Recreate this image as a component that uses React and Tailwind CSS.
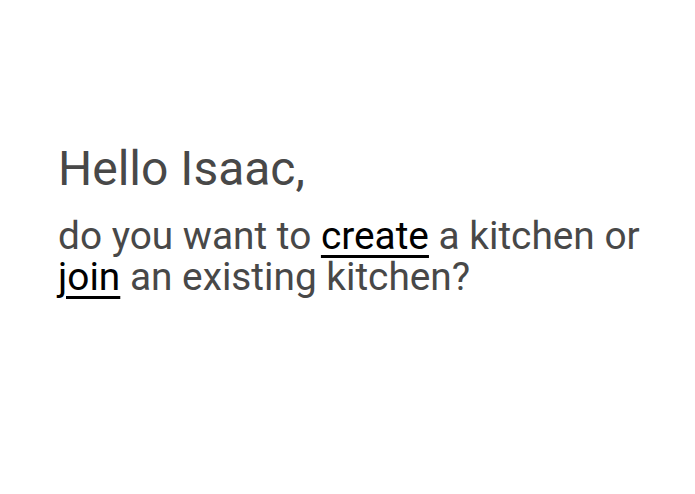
import React from "react";

const App = () => {
  return (
    <div className="w-[695px] h-[494px] bg-white font-['Roboto',sans-serif] text-[#484848]">
      <div className="pt-[141px] pl-[58px] pr-[30px]">
        <h1 className="text-[48px] leading-[56px] font-normal">Hello Isaac,</h1>
        <p className="mt-[18px] text-[38.8px] leading-[41px]">
          do you want to{" "}
          <a href="#" className="text-black underline decoration-[2.5px] underline-offset-[6px]">create</a>{" "}
          a kitchen or{" "}
          <a href="#" className="text-black underline decoration-[2.5px] underline-offset-[6px]">join</a>{" "}
          an existing kitchen?
        </p>
      </div>
    </div>
  );
};

export default App;
